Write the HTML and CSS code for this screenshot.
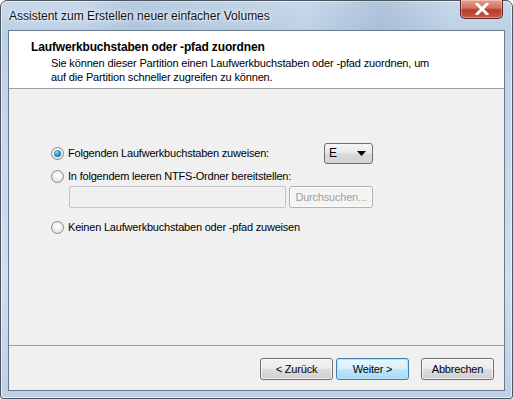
FILE: index.html
```html
<!DOCTYPE html>
<html>
<head>
<meta charset="utf-8">
<link rel="stylesheet" href="styles.css">
</head>
<body>
<div class="window">
  <div class="titlebar">
    <span class="title">Assistent zum Erstellen neuer einfacher Volumes</span>
    <div class="close"><svg width="14" height="12" viewBox="0 0 14 12"><path d="M2 1 L12 11 M12 1 L2 11" stroke="#fff" stroke-width="3" stroke-linecap="square"/></svg></div>
  </div>
  <div class="client">
    <div class="header">
      <div class="h-title">Laufwerkbuchstaben oder -pfad zuordnen</div>
      <div class="h-sub">Sie können dieser Partition einen Laufwerkbuchstaben oder -pfad zuordnen, um<br>auf die Partition schneller zugreifen zu können.</div>
    </div>
    <div class="content">
      <div class="row row1">
        <span class="radio checked"></span>
        <span class="label">Folgenden Laufwerkbuchstaben zuweisen:</span>
        <div class="combo"><span>E</span><svg width="9" height="5" viewBox="0 0 9 5"><path d="M0 0 H9 L4.5 5 Z" fill="#000"/></svg></div>
      </div>
      <div class="row row2">
        <span class="radio"></span>
        <span class="label">In folgendem leeren NTFS-Ordner bereitstellen:</span>
      </div>
      <div class="pathrow">
        <div class="pathbox"></div>
        <div class="btn disabled">Durchsuchen...</div>
      </div>
      <div class="row row3">
        <span class="radio"></span>
        <span class="label">Keinen Laufwerkbuchstaben oder -pfad zuweisen</span>
      </div>
    </div>
    <div class="footer">
      <div class="btn wbtn">&lt; Zurück</div>
      <div class="btn wbtn default">Weiter &gt;</div>
      <div class="btn wbtn cancel">Abbrechen</div>
    </div>
  </div>
</div>
</body>
</html>
```
FILE: styles.css
```css
html, body {
  margin: 0;
  padding: 0;
  width: 513px;
  height: 399px;
  overflow: hidden;
  background: #ffffff;
}
body {
  font-family: "Liberation Sans", Arial, sans-serif;
  font-size: 11px;
  letter-spacing: -0.2px;
  color: #000;
}
.window {
  box-sizing: border-box;
  width: 513px;
  height: 399px;
  border: 1px solid #4a5560;
  border-radius: 7px 7px 3px 3px;
  background: linear-gradient(180deg, #c9d9ea 0%, #bcd0e5 8%, #c4d6ea 30%, #cfdfef 70%, #bdd0e4 100%);
  display: flex;
  flex-direction: column;
  padding: 0 7px 7px 7px;
  box-shadow: inset 0 0 0 1px rgba(255,255,255,0.6);
}
.titlebar {
  height: 29px;
  display: flex;
  align-items: flex-start;
  justify-content: space-between;
  background: linear-gradient(90deg, rgba(255,255,255,0) 0%, rgba(255,255,255,0) 15%, rgba(150,175,205,0.35) 25%, rgba(255,255,255,0) 60%, rgba(120,150,185,0.3) 75%, rgba(255,255,255,0) 90%);
}
.title {
  margin-top: 8px;
  margin-left: 1px;
  font-size: 12px;
  letter-spacing: 0;
  color: #111;
  text-shadow: 0 0 6px #fff, 0 0 3px #fff;
}
.close {
  width: 43px;
  height: 19px;
  margin-top: -1px;
  margin-right: 2px;
  box-sizing: border-box;
  border: 1px solid #5a2a2a;
  border-top: none;
  border-radius: 0 0 5px 5px;
  background: linear-gradient(180deg, #e8a090 0%, #d07060 45%, #b83a28 55%, #c85a40 100%);
  display: flex;
  align-items: center;
  justify-content: center;
  box-shadow: inset 0 0 0 1px rgba(255,255,255,0.35);
}
.client {
  flex: 1;
  display: flex;
  flex-direction: column;
  background: #f0f0f0;
  border: 1px solid #6a7a8c;
}
.header {
  height: 58px;
  background: #ffffff;
  border-bottom: 1px solid #a0a0a0;
  box-sizing: border-box;
  padding: 9px 0 0 22px;
}
.h-title {
  font-weight: bold;
  font-size: 12px;
  letter-spacing: -0.15px;
  line-height: 15px;
}
.h-sub {
  margin-left: 20px;
  margin-top: 1px;
  line-height: 14px;
  letter-spacing: -0.15px;
}
.content {
  flex: 1;
  padding-left: 42px;
  padding-top: 54px;
  box-sizing: border-box;
}
.row {
  display: flex;
  align-items: center;
  height: 20px;
}
.row1 {
  width: 322px;
}
.label {
  margin-left: 4px;
}
.radio {
  box-sizing: border-box;
  width: 13px;
  height: 13px;
  border-radius: 50%;
  border: 1px solid #8a8a8a;
  background: radial-gradient(circle at 50% 40%, #ffffff 0%, #f2f2f2 40%, #d6d6d6 100%);
  display: inline-flex;
  align-items: center;
  justify-content: center;
}
.radio.checked::after {
  content: "";
  width: 7px;
  height: 7px;
  border-radius: 50%;
  background: radial-gradient(circle at 40% 35%, #9ed6f0 0%, #2d8fc4 45%, #135a86 100%);
}
.combo {
  margin-left: auto;
  box-sizing: border-box;
  width: 49px;
  height: 21px;
  border: 1px solid #707070;
  border-radius: 3px;
  background: linear-gradient(180deg, #f6f6f6 0%, #e9e9e9 48%, #d9d9d9 52%, #d2d2d2 100%);
  display: flex;
  align-items: center;
  justify-content: space-between;
  padding: 0 6px 0 4px;
  font-size: 12px;
}
.row2 {
  margin-top: 3px;
}
.pathrow {
  display: flex;
  margin-top: 0px;
  margin-left: 18px;
  height: 22px;
}
.pathbox {
  box-sizing: border-box;
  width: 217px;
  height: 22px;
  border: 1px solid #c4c4c4;
  border-radius: 2px;
  background: #f0f0f0;
}
.btn {
  box-sizing: border-box;
  height: 22px;
  border: 1px solid #707070;
  border-radius: 3px;
  background: linear-gradient(180deg, #f2f2f2 0%, #ebebeb 48%, #dddddd 52%, #cfcfcf 100%);
  display: flex;
  align-items: center;
  justify-content: center;
  box-shadow: inset 0 0 0 1px rgba(255,255,255,0.7);
}
.btn.disabled {
  margin-left: 3px;
  width: 84px;
  color: #a0a0a0;
  border-color: #adb2b5;
  background: #f4f4f4;
}
.row3 {
  margin-top: 9px;
}
.footer {
  height: 45px;
  border-top: 1px solid #a0a0a0;
  box-sizing: border-box;
  display: flex;
  justify-content: flex-end;
  align-items: flex-start;
  padding: 12px 10px 0 0;
}
.wbtn {
  width: 73px;
  height: 22px;
}
.wbtn.default {
  margin-left: 3px;
  border-color: #3c7fb1;
  background: linear-gradient(180deg, #eaf6fd 0%, #d9f0fc 48%, #bee6fd 52%, #a7d9f5 100%);
  box-shadow: inset 0 0 0 1px #b8e4fa;
}
.wbtn.cancel {
  margin-left: 12px;
}
```
